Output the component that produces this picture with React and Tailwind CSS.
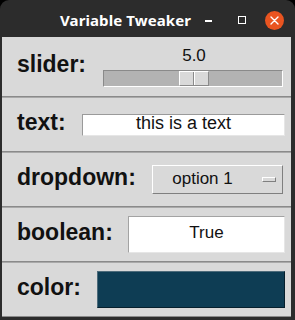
import React from "react";

const LABEL = "font-bold text-[23px] leading-none pb-[5px] text-[#111]";
const SANS = { fontFamily: '"Liberation Sans", Arial, sans-serif' };

function Row({ label, children, tall }) {
  return (
    <div className={`flex items-center pl-[15px] pr-[6px] ${tall ? "h-[59px]" : "h-[53px]"}`}>
      <div className={LABEL}>{label}</div>
      <div className="ml-auto flex items-center">{children}</div>
    </div>
  );
}

function Sep() {
  return (
    <div className="flex flex-col">
      <div className="h-px bg-[#8a8a8a]" />
      <div className="h-px bg-[#a9a9a9]" />
    </div>
  );
}

function Slider({ value }) {
  return (
    <div className="flex flex-col mr-[2px]">
      <div className="flex text-[17px] leading-[20px] mb-[4px] text-[#111]">
        <span className="ml-[76px] w-[30px] text-center">{value.toFixed(1)}</span>
      </div>
      <div className="w-[180px] h-[17px] bg-[#b3b3b3] border border-t-[#8a8a8a] border-l-[#8a8a8a] border-b-white border-r-white flex pl-[75px]">
        <div className="w-[30px] h-full bg-[#d9d9d9] border border-t-white border-l-white border-b-[#8a8a8a] border-r-[#8a8a8a] flex">
          <div className="w-[13px]" />
          <div className="w-px bg-[#8a8a8a]" />
          <div className="w-px bg-white" />
        </div>
      </div>
    </div>
  );
}

function TitleBar() {
  return (
    <div className="h-[37px] flex items-center pt-[3px] text-white">
      <div
        className="ml-[58px] text-[15px] font-bold tracking-[0.1px]"
        style={{ fontFamily: '"Noto Sans", "DejaVu Sans", sans-serif' }}
      >
        Variable Tweaker
      </div>
      <div className="ml-auto flex items-center">
        <div className="w-[33px] h-[24px] flex items-center justify-center pt-[2px]">
          <div className="w-[7px] h-[1.5px] bg-white" />
        </div>
        <div className="w-[33px] h-[24px] flex items-center justify-center">
          <div className="w-[8px] h-[8px] border border-white" />
        </div>
        <div className="w-[33px] h-[24px] flex items-center justify-center">
          <div className="w-[19px] h-[19px] rounded-full bg-[#e95420] flex items-center justify-center">
            <svg width="9" height="9" viewBox="0 0 9 9">
              <path d="M1 1 L8 8 M8 1 L1 8" stroke="white" strokeWidth="1.4" strokeLinecap="round" />
            </svg>
          </div>
        </div>
      </div>
    </div>
  );
}

export default function App() {
  return (
    <div className="w-[295px] h-[320px] bg-black" style={SANS}>
      <div className="h-full rounded-t-[9px] bg-[#2c2c2c] flex flex-col pl-[2px] pr-[4px] pb-[3px]">
        <TitleBar />
        <div className="flex-1 bg-[#d9d9d9] flex flex-col">
          <Row label="slider:" tall>
            <Slider value={5} />
          </Row>
          <Sep />
          <Row label="text:">
            <div className="w-[203px] h-[22px] bg-white border border-t-[#9a9a9a] border-l-[#9a9a9a] border-b-[#e6e6e6] border-r-[#e6e6e6] flex items-center justify-center text-[18px] leading-none pb-[3px] text-[#111]">
              this is a text
            </div>
          </Row>
          <Sep />
          <Row label="dropdown:">
            <div className="mr-[2px] w-[131px] h-[29px] bg-[#d9d9d9] border border-t-white border-l-white border-b-[#7f7f7f] border-r-[#7f7f7f] flex items-center text-[17px] text-[#111]">
              <span className="flex-1 text-center leading-none pb-[2px]">option 1</span>
              <div className="ml-[10px] mr-[6px] w-[14px] h-[5px] bg-[#d9d9d9] border border-t-white border-l-white border-b-[#7f7f7f] border-r-[#7f7f7f]" />
            </div>
          </Row>
          <Sep />
          <Row label="boolean:">
            <div className="w-[157px] h-[37px] bg-white border border-[#a3a3a3] border-b-[#e6e6e6] border-r-[#e6e6e6] flex items-center justify-center text-[17px] leading-none pb-[5px] text-[#111]">
              True
            </div>
          </Row>
          <Sep />
          <Row label="color:">
            <div className="w-[188px] h-[37px] bg-[#0e3d54] border border-t-[#4d6b7a] border-l-[#4d6b7a] border-b-[#06202d] border-r-[#06202d]" />
          </Row>
          <div className="h-px bg-[#8a8a8a]" />
        </div>
      </div>
    </div>
  );
}
